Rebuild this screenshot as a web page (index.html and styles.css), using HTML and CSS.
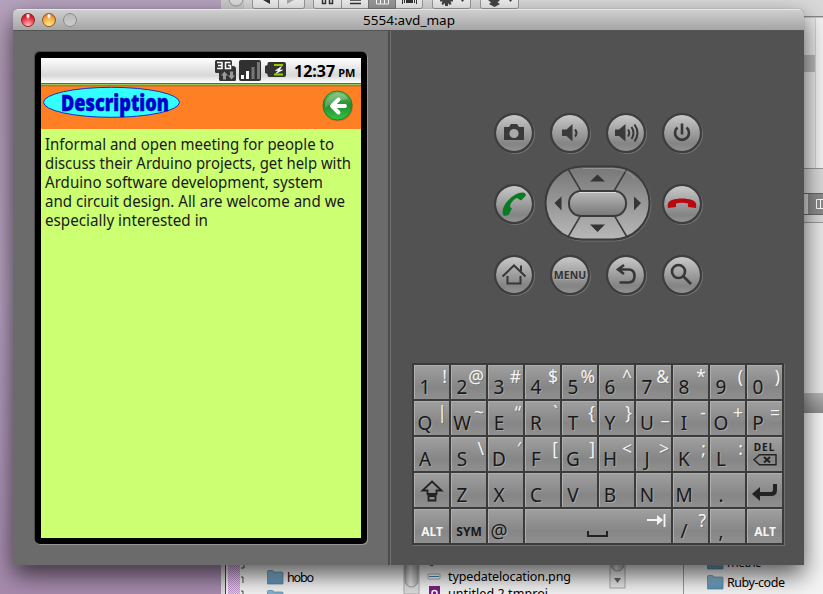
FILE: index.html
```
<!DOCTYPE html>
<html lang="en">
<head>
<meta charset="utf-8">
<title>5554:avd_map</title>
<link rel="stylesheet" href="styles.css">
</head>
<body>
<div class="desktop">
<svg class="backdrop" width="823" height="594" viewBox="0 0 823 594">
  <defs>
    <linearGradient id="wall" x1="0" y1="0" x2="0" y2="1"><stop offset="0" stop-color="#b7a3be"/><stop offset=".12" stop-color="#b39bb9"/><stop offset=".5" stop-color="#b5a0bf"/><stop offset="1" stop-color="#a78bae"/></linearGradient>
    <linearGradient id="folder" x1="0" y1="0" x2="0" y2="1"><stop offset="0" stop-color="#8fbbd6"/><stop offset="1" stop-color="#5f93b5"/></linearGradient>
    <linearGradient id="bar" x1="0" y1="0" x2="0" y2="1"><stop offset="0" stop-color="#b5b5b5"/><stop offset="1" stop-color="#8c8c8c"/></linearGradient>
    <linearGradient id="thumb"><stop offset="0" stop-color="#aaa"/><stop offset=".4" stop-color="#e8e8e8"/><stop offset="1" stop-color="#aaa"/></linearGradient>
    <pattern id="dots" width="2" height="2" patternUnits="userSpaceOnUse"><rect width="2" height="2" fill="#ecd0f0"/><path d="M0 0h1v1h-1zM1 1h1v1h-1z" fill="#c49acf"/></pattern>
  </defs>
  <rect width="823" height="594" fill="url(#wall)"/>
  <rect x="221" width="602" height="17" fill="#d9d9d9"/>
  <rect x="221" width="23" height="10" fill="#ccc"/>
  <circle cx="236" cy="-1" r="7" fill="#ddd" stroke="#999"/>
  <g fill="#eee" stroke="#999">
    <rect x="252.500" y="-8" width="52" height="16.500" rx="2"/><path d="M278.500 0V8"/>
    <rect x="313.500" y="-8" width="109" height="16.500" rx="2"/><path d="M341.500 0V8"/>
    <rect x="368.500" y="-8" width="27" height="16.500" fill="#999" stroke="#777"/>
    <rect x="432.500" y="-8" width="38" height="16.500" rx="2"/><rect x="480.500" y="-8" width="38" height="16.500" rx="2"/>
  </g>
  <path d="M263 0h7v4z" fill="#333"/><path d="M287 0h7l-7 4z" fill="#aaa"/>
  <path d="M322.500 0v3.500h3V0M329.500 0v3.500h3V0" fill="none" stroke="#333" stroke-width="1.500"/>
  <path d="M350 0h11M350 3.500h11" stroke="#333" stroke-width="1.500"/>
  <path d="M376.500 0v4h12V0M380.500 0v4M384.500 0v4" fill="none" stroke="#fff"/>
  <path d="M402.500 0v4M404.500 0v3M414.500 0v3M416.500 0v4" stroke="#333"/><rect x="406" width="7" height="3" fill="#333"/>
  <path d="M440 0h13v1.500h-2.500l1 2.500-2 1-1.500-2v3h-3V3l-2 2-1.500-1 1-2.500H440z" fill="#444"/>
  <path d="M488 0h12l-2.500 2.500L500 4l-5.500 3L489 4l2-1.500z" fill="#444"/>
  <path d="M461 0h3l-1.500 2zM509 0h3l-1.500 2z" fill="#333"/>
  <rect x="804" y="16" width="19" height="1.500" fill="#888"/>
  <rect x="804" y="17.500" width="11" height="151" fill="#e8e8e8"/>
  <rect x="804" y="55" width="11" height="17" fill="#b8b8b8"/>
  <rect x="815" y="17.500" width="8" height="151" fill="#f3f3f3"/><path d="M815.500 18V168" stroke="#d0d0d0"/>
  <rect x="804" y="168" width="19" height="55" fill="#d9d9d9"/>
  <path d="M804 168.500h19M804 222.500h19" stroke="#999"/>
  <rect x="808" y="193" width="15" height="22" fill="#8b8b8b"/><path d="M804 193.500h19M804 214.500h19" stroke="#666"/>
  <path d="M823 199.500h-6.500v9h6.500M820.500 199v9" fill="none" stroke="#fff"/>
  <rect x="804" y="223" width="19" height="171" fill="#e8e8e8"/>
  <rect x="804" y="393" width="19" height="20" fill="url(#bar)"/>
  <rect x="804" y="413" width="19" height="181" fill="#f6f6f6"/>
  <rect x="221" y="560" width="602" height="34" fill="#f4f4f4"/>
  <path d="M225.500 560v34" stroke="#444"/><rect x="221" y="560" width="4" height="34" fill="#ddd"/>
  <rect x="228" y="560" width="12" height="34" fill="url(#dots)"/>
  <path d="M241 568h3v-4M241 577h2v6M241 591h2v3" fill="none" stroke="#444"/>
  <rect x="404" y="560" width="15" height="34" fill="#ddd" stroke="#aaa"/>
  <rect x="405" y="550" width="13" height="37" rx="6.500" fill="url(#thumb)" stroke="#999"/>
  <rect x="610" y="560" width="15" height="28" fill="#e8e8e8" stroke="#aaa"/>
  <rect x="611" y="553" width="13" height="18" rx="6.500" fill="url(#thumb)" stroke="#999"/>
  <path d="M614 578h7l-3.500 5z" fill="#666"/><path d="M683.500 560v34" stroke="#999"/>
  <g fill="url(#folder)" stroke="#4f82a3" stroke-width=".7">
    <path id="dir" d="M267.500 571.500q0-1 1-1h4q1 0 1 1.500h8.500q1 0 1 1v11h-15.500z"/>
    <use href="#dir" y="20"/><use href="#dir" x="440" y="5"/><use href="#dir" x="440" y="-15"/>
  </g>
  <rect x="428" y="574" width="12" height="5" rx="1" fill="#fff" stroke="#aaa"/><path d="M429 576.500h10" stroke="#3e87a9"/>
  <rect x="429" y="586" width="11" height="12" fill="#7b1f84"/><circle cx="434.500" cy="593" r="2.500" fill="none" stroke="#fff" stroke-width="1.500"/>
  <path d="M429 565h5l-2 1.500z" fill="#c20"/>
  <g class="file-name">
    <text x="287" y="582" textLength="27">hobo</text>
    <text x="448" y="581" textLength="123">typedatelocation.png</text>
    <text x="448" y="598" textLength="100">untitled 2.tmproj</text>
    <text x="727" y="567" textLength="34">metric</text>
    <text x="727" y="587" textLength="58">Ruby-code</text>
  </g>
</svg>

<main class="window">
  <header class="titlebar">
    <div class="lights"><i class="light red"></i><i class="light amber"></i><i class="light off"></i></div>
    <h1><svg width="94" height="20"><text x="1" y="15" textLength="92" lengthAdjust="spacingAndGlyphs">5554:avd_map</text></svg></h1>
  </header>
  <div class="panes">
    <section class="left">
      <div class="phone"><div class="screen">
        <div class="status">
          <svg width="74" height="22" viewBox="214 59 74 22">
            <rect x="215" y="60" width="17" height="13" rx="1.500" fill="#333"/><rect x="219" y="70" width="17" height="11" rx="1.500" fill="#333"/><path d="M230 66h3q3 0 3 3v5h-6z" fill="#333"/>
            <path d="M217 62.500h5v3h-4M222 65v3.500h-5M230.500 62.500h-5v6h5v-3h-2.500" fill="none" stroke="#fff" stroke-width="1.500"/>
            <path d="M224.500 71.500l3.500 4h-2v4h-3v-4h-2zM231.500 79.500l3.500-4h-2v-4h-3v4h-2z" fill="#999"/>
            <rect x="239" y="60" width="22" height="21" rx="2" fill="#303030"/>
            <path d="M241 75h3v4h-3zM246 71h3v8h-3z" fill="#fff"/><path d="M251.500 67h3v12h-3zM257 62h3v17h-3z" fill="#777"/>
            <path d="M269 62h15q2 0 2 2v11q0 2-2 2h-15q-1.500 0-1.500-2v-1l-2.500-1v-7l2.500-1v-1q0-2 1.500-2z" fill="#333"/>
            <path d="M274 64h9v2h-9zM274 73.500h9v2h-9z" fill="#9c0"/><path d="M281.500 66.500l-6 4h3l-2.500 3 6.500-3.500h-3z" fill="#fff" stroke="#fff" stroke-width=".6"/>
          </svg>
          <span class="clock">12:37 <small>PM</small></span>
        </div>
        <div class="banner">
          <svg class="logo" width="140" height="34" viewBox="42 86 140 34">
            <ellipse cx="111.500" cy="102.300" rx="68" ry="15" fill="#3ff" stroke="#1530c8"/>
            <text x="61" y="111" textLength="108" lengthAdjust="spacingAndGlyphs">Description</text>
          </svg>
          <svg class="back" width="32" height="32" viewBox="0 0 32 32">
            <defs><linearGradient id="green" x1="0" y1="0" x2="0" y2="1"><stop offset="0" stop-color="#72bd6d"/><stop offset=".5" stop-color="#258c2d"/><stop offset="1" stop-color="#32c743"/></linearGradient></defs>
            <circle cx="16" cy="16.500" r="15" fill="#8c4a20" opacity=".35"/><circle cx="15.500" cy="15.500" r="14.500" fill="url(#green)" stroke="#158a20"/>
            <path d="M3 18Q2 6 15 3q8 0 11 6Q12 11 3 18z" fill="#fff" opacity=".22"/>
            <path d="M16.500 9.500L10 16l6.500 6.500M11 16h12" fill="none" stroke="#fff" stroke-width="3.900" stroke-linecap="round" stroke-linejoin="round"/>
          </svg>
        </div>
        <svg class="copy" width="320" height="105" viewBox="41 129 320 105">
          <text x="45" y="150" textLength="289" lengthAdjust="spacingAndGlyphs">Informal and open meeting for people to</text>
          <text x="45" y="169" textLength="306" lengthAdjust="spacingAndGlyphs">discuss their Arduino projects, get help with</text>
          <text x="45" y="188" textLength="278" lengthAdjust="spacingAndGlyphs">Arduino software development, system</text>
          <text x="45" y="207" textLength="300" lengthAdjust="spacingAndGlyphs">and circuit design. All are welcome and we</text>
          <text x="45" y="226" textLength="163" lengthAdjust="spacingAndGlyphs">especially interested in</text>
        </svg>
      </div></div>
    </section>
    <section class="right">
      <div class="controls">
        <button class="round"><svg viewBox="0 0 40 40"><path d="M10 14h5l2-3h6l2 3h5v13H10z"/><circle cx="20" cy="20.500" r="4.600" fill="#aaa"/></svg></button>
        <button class="round"><svg viewBox="0 0 40 40"><path d="M12 16.500h4.500l6-5.500v17.500l-6-5.500H12z"/><path class="line" d="M25 16.500q3 3.500 0 7"/></svg></button>
        <button class="round"><svg viewBox="0 0 40 40"><path d="M9 16.500h4l6.500-5.500v17.500L13 23H9z"/><path class="line" d="M22 16.500q2.500 3.500 0 7M25.500 14q4 6 0 12M28.500 11.500q6 8.500 0 17"/></svg></button>
        <button class="round"><svg viewBox="0 0 40 40"><path class="line bold" d="M15.500 14.500a7 7 0 1 0 9 0M20 10.500v11"/></svg></button>

        <button class="round"><svg viewBox="0 0 40 40"><path class="call" d="M10 32c-3-4-1-10 4-15.500S27 7 31 9l1 2.500-5 5-4-2.500c-3 1-7 5-7 9l2 1.500-3.500 6.500z"/></svg></button>
        <div class="dpad"><svg width="108" height="77" viewBox="0 0 108 77">
          <defs><linearGradient id="pad" x1="0" y1="0" x2="0" y2="1"><stop offset="0" stop-color="#777"/><stop offset="1" stop-color="#b8b8b8"/></linearGradient><linearGradient id="nub" x1="0" y1="0" x2="0" y2="1"><stop offset="0" stop-color="#bbb"/><stop offset="1" stop-color="#777"/></linearGradient></defs>
          <rect x="2" y="2" width="105" height="74" rx="37" fill="none" stroke="#737373"/>
          <rect x="1.500" y="1.500" width="104" height="73" rx="36.500" fill="url(#pad)" stroke="#3b3b3b" stroke-width="2"/>
          <path d="M24 4l13 22M83 4L70 26M24 72l13-22M83 72L70 50" stroke="#3b3b3b" stroke-width="1.500"/>
          <path d="M39 3.500h29q15 0 23 10" fill="none" stroke="#aaa" opacity=".6"/>
          <rect x="25" y="26" width="57" height="25" rx="12" fill="url(#nub)" stroke="#3b3b3b" stroke-width="2"/><path d="M35 27.500h37" stroke="#ddd"/>
          <path d="M53.500 9.500l7.500 7H46zM53.500 67l7.500-7.500H46zM10.500 38l7-6.500v14zM97 38l-7-6.500v14z" fill="#353535"/>
        </svg></div>
        <button class="round end"><svg viewBox="0 0 40 40"><path class="hang" d="M6 24c-1-5 1-7 4-8 6-2 14-2 20 0 3 1 5 3 4 8l-8-1v-3.500q-6-1.500-12 0v3.500z"/></svg></button>

        <button class="round"><svg viewBox="0 0 40 40"><path class="line" d="M8.500 21.500L20 10.500l11.500 11M27 16v-5.500"/><path class="line" d="M18 28.500h-4.500V21M13.500 28.500h13V21"/></svg></button>
        <button class="round menu">MENU</button>
        <button class="round"><svg viewBox="0 0 40 40"><path class="line bold" d="M18 10l-6 4.500 6 4.500M12.500 14.500h10q6 0 6 6.500t-6 6.500h-9"/></svg></button>
        <button class="round"><svg viewBox="0 0 40 40"><circle class="line bold" cx="16.500" cy="16.500" r="6.500"/><path class="line bold" d="M21 21l8 8"/></svg></button>
      </div>

      <div class="keys">
        <div class="key"><b>1</b><s>!</s></div><div class="key"><b>2</b><s>@</s></div><div class="key"><b>3</b><s>#</s></div><div class="key"><b>4</b><s>$</s></div><div class="key"><b>5</b><s>%</s></div><div class="key"><b>6</b><s>^</s></div><div class="key"><b>7</b><s>&amp;</s></div><div class="key"><b>8</b><s>*</s></div><div class="key"><b>9</b><s>(</s></div><div class="key"><b>0</b><s>)</s></div>
        <div class="key"><b>Q</b><s>|</s></div><div class="key"><b>W</b><s>~</s></div><div class="key"><b>E</b><s>“</s></div><div class="key"><b>R</b><s>`</s></div><div class="key"><b>T</b><s>{</s></div><div class="key"><b>Y</b><s>}</s></div><div class="key"><b>U</b><s>_</s></div><div class="key"><b>I</b><s>-</s></div><div class="key"><b>O</b><s>+</s></div><div class="key"><b>P</b><s>=</s></div>
        <div class="key"><b>A</b></div><div class="key"><b>S</b><s>\</s></div><div class="key"><b>D</b><s>′</s></div><div class="key"><b>F</b><s>[</s></div><div class="key"><b>G</b><s>]</s></div><div class="key"><b>H</b><s>&lt;</s></div><div class="key"><b>J</b><s>&gt;</s></div><div class="key"><b>K</b><s>;</s></div><div class="key"><b>L</b><s>:</s></div>
        <div class="key del"><span>DEL</span><svg width="24" height="12"><path d="M6.500.7H23v10H6.500L1 5.700z" fill="none" stroke="#222" stroke-width="1.400"/><path d="M11 3l6 5.500M17 3l-6 5.500" stroke="#222" stroke-width="2"/></svg></div>
        <div class="key"><svg width="35" height="34"><path d="M18 8.500l9.500 9h-5V21h-9v-3.500h-5zM14.500 23h7v4.500h-7z" fill="none" stroke="#222" stroke-width="1.800"/></svg></div>
        <div class="key"><b>Z</b></div><div class="key"><b>X</b></div><div class="key"><b>C</b></div><div class="key"><b>V</b></div><div class="key"><b>B</b></div><div class="key"><b>N</b></div><div class="key"><b>M</b></div><div class="key"><b>.</b></div>
        <div class="key"><svg width="35" height="34"><path d="M28 11v6q0 4-4 4H10" fill="none" stroke="#222" stroke-width="4"/><path d="M5 21l8-7v14z" fill="#222"/></svg></div>
        <div class="key word alt">ALT</div><div class="key word">SYM</div><div class="key"><b>@</b></div>
        <div class="key space"><svg width="146" height="34"><path d="M63 22v5h19V22" fill="none" stroke="#222" stroke-width="2"/><path d="M122 11h13M139.500 5v13" stroke="#f4f4f4" stroke-width="1.800" fill="none"/><path d="M138 11l-6-5v10z" fill="#f4f4f4"/></svg></div>
        <div class="key"><b>/</b><s>?</s></div><div class="key"><b>,</b></div><div class="key word alt">ALT</div>
      </div>
    </section>
  </div>
</main>
</div>
</body>
</html>
```
FILE: styles.css
```
* { box-sizing: border-box; }
body { margin: 0; overflow: hidden; font-family: "Noto Sans", "Open Sans", sans-serif; }
svg { display: block; }
.desktop { position: relative; width: 823px; height: 594px; overflow: hidden; }
.backdrop { position: absolute; inset: 0; }
.file-name { font-size: 12.5px; fill: #000; }

.window {
  position: absolute; left: 13px; top: 9px; width: 791px; height: 556px;
  display: flex; flex-direction: column;
  border-radius: 5px 5px 0 0; background: #525252;
  box-shadow: 0 0 1px #777, 0 10px 24px rgba(0, 0, 0, .65);
}
.titlebar {
  height: 22px; flex: none; display: grid; grid-template-columns: 1fr auto 1fr; align-items: center;
  border-top: 1px solid #e6e6e6; border-bottom: 1px solid #555; border-radius: 5px 5px 0 0;
  background: linear-gradient(#cfcfcf, #a5a5a5);
}
.titlebar h1 { margin: 0; font-size: 13px; font-weight: 400; }
.lights { display: flex; gap: 7px; padding-left: 8px; }
.light { width: 14px; height: 14px; border-radius: 50%; border: 1px solid #8a8a8a; background: linear-gradient(#bbb, #ccc); }
.red { border-color: #8c2630; background: radial-gradient(ellipse at 50% 15%, #fff 0 8%, transparent 25%), radial-gradient(circle at 50% 95%, #ffc0c0, #e52235 65%, #a90c1d); }
.amber { border-color: #98551e; background: radial-gradient(ellipse at 50% 15%, #fff 0 8%, transparent 25%), radial-gradient(circle at 50% 95%, #fff28c, #f1a13c 65%, #c05c13); }

.panes { flex: 1; display: flex; min-height: 0; }
.left { width: 378px; background: #6b6b6b; border-right: 1px solid #737373; box-shadow: inset -2px 0 #4b4b4b; padding: 21px 0 0 22px; }
.phone { width: 332px; height: 492px; padding: 6px; border-radius: 5px; background: #000; box-shadow: 1px 1px #969696, -1px -1px #4d4d4d; }
.screen { height: 480px; background: #ccff72; overflow: hidden; }
.status { height: 25px; display: flex; align-items: flex-start; padding: 1px 0 0 173px; background: linear-gradient(#fff, #e0e0e0 55%, #d8d8d8 70%, #fff); }
.clock { margin-left: 6px; font-size: 16px; line-height: 24px; font-weight: 700; white-space: nowrap; color: #000; }
.clock small { font-size: 11px; margin-left: -1px; }
.banner { height: 46px; display: flex; justify-content: space-between; align-items: flex-start; padding: 3px 7px 0 1px; background: linear-gradient(#477f20 0 1px, #9ac455 1px 2px, #c7702c 2px 3px, #ff7f24 4px); }
.logo text { font: 800 22.5px "Open Sans", sans-serif; fill: #0000cd; stroke: #0000cd; stroke-width: .5px; }
.back { margin-top: 4px; }
.copy { font-size: 16px; fill: #1a1a1a; }

.right { flex: 1; padding: 81px 0 0 21px; }
.controls { width: 208px; margin-left: 82px; display: grid; grid-template-columns: repeat(4, 40px); column-gap: 16px; row-gap: 31px; grid-template-rows: repeat(3, 40px); }
.round {
  width: 40px; height: 40px; padding: 0; border: 2px solid #3d3d3d; border-radius: 50%;
  background: linear-gradient(#c8c8c8, #848484 80%, #929292) padding-box; box-shadow: 1px 1px #707070; color: #333;
  font: 700 10.5px "Noto Sans", sans-serif; position: relative; top: 1px;
}
.round svg { width: 40px; height: 40px; margin: -2px; fill: #3a3a3a; }
.round .line { fill: none; stroke: #373737; stroke-width: 2; }
.round .bold { stroke-width: 2.6; }
.round .call { fill: #087a24; }
.round .hang { fill: #b9090f; }
.menu { letter-spacing: 0; text-shadow: 0 1px #aaa; }
.dpad { grid-column: 2 / 4; margin: -18px 0 0 -6px; width: 108px; }

.keys {
  width: 372px; height: 182px; margin-top: 69px; padding: 2px; display: grid;
  grid-template-columns: repeat(10, 35px); grid-auto-rows: 34px; gap: 2px;
  background: #3b3b3b; box-shadow: 1px 1px #707070;
}
.key { position: relative; background: linear-gradient(#a0a0a0, #868686 65%, #8f8f8f); box-shadow: inset 1px 1px #aeaeae; color: #191919; }
.key b, .key s { position: absolute; line-height: 24px; text-decoration: none; font-weight: 400; }
.key b { left: -4px; top: 10px; width: 30px; text-align: center; font-size: 19px; text-shadow: 1px 1px #a5a5a5; }
.key s { right: 2px; top: -1px; font-size: 17.5px; color: #f4f4f4; text-shadow: 1px 1px #777; }
.space { grid-column: span 4; }
.word { font-size: 12px; font-weight: 700; line-height: 45px; height: 34px; text-align: center; padding-left: 1px; }
.alt { color: #f5f5f5; }
.del { display: flex; flex-direction: column; align-items: center; padding-top: 5px; font-size: 10px; font-weight: 700; line-height: 11px; letter-spacing: 1px; }
.del svg { margin-top: 1px; }
```
